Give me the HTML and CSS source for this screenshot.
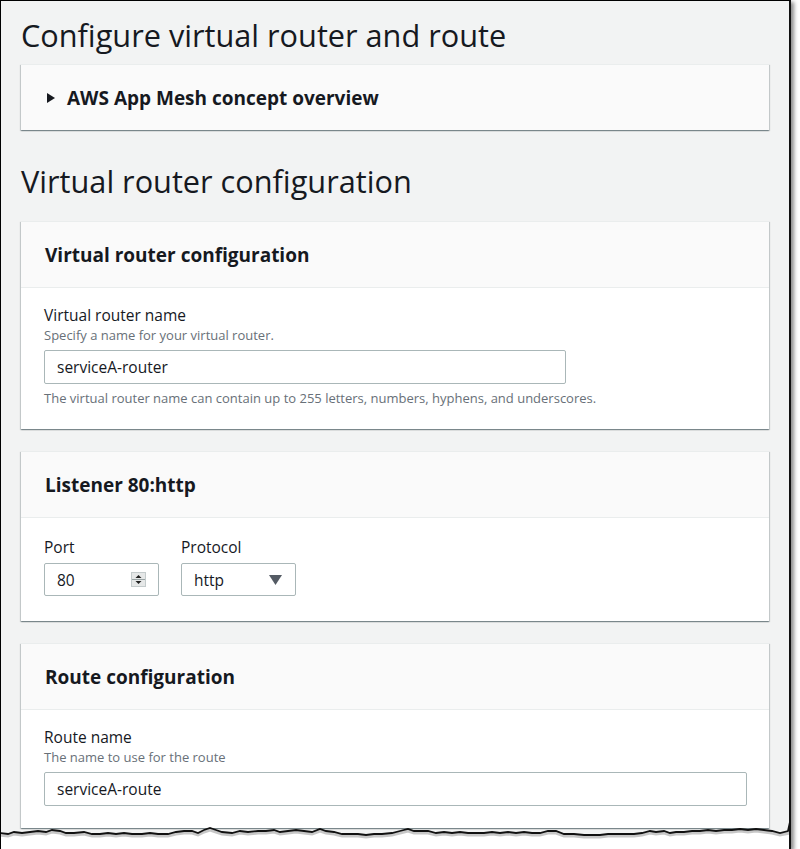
FILE: index.html
```html
<!DOCTYPE html>
<html lang="en">
<head>
<meta charset="utf-8">
<title>Configure virtual router and route</title>
<link rel="stylesheet" href="styles.css">
</head>
<body>
<div class="frame">
  <h1 class="page-title">Configure virtual router and route</h1>

  <div class="card expand">
    <div class="expand-head">
      <svg class="caret" width="8" height="10" viewBox="0 0 8 10"><polygon points="0,0 8,5 0,10" fill="#16191f"/></svg>
      <span>AWS App Mesh concept overview</span>
    </div>
  </div>

  <h2 class="section-title">Virtual router configuration</h2>

  <div class="card">
    <div class="card-head">Virtual router configuration</div>
    <div class="card-body">
      <div class="label">Virtual router name</div>
      <div class="desc">Specify a name for your virtual router.</div>
      <div class="input wide-a">serviceA-router</div>
      <div class="help">The virtual router name can contain up to 255 letters, numbers, hyphens, and underscores.</div>
    </div>
  </div>

  <div class="card">
    <div class="card-head">Listener 80:http</div>
    <div class="card-body body-listener">
      <div class="row">
        <div class="field">
          <div class="label lbl-tight">Port</div>
          <div class="input small">
            <span>80</span>
            <svg class="spinner" width="15" height="15" viewBox="0 0 15 15">
              <rect x="0.5" y="0.5" width="14" height="14" fill="#e6e8e8" stroke="#c4cbcc"/>
              <line x1="1" y1="7.5" x2="14" y2="7.5" stroke="#9aa4a5"/>
              <polygon points="4.5,6 7.5,3 10.5,6" fill="#222"/>
              <polygon points="4.5,9 7.5,12 10.5,9" fill="#222"/>
            </svg>
          </div>
        </div>
        <div class="field">
          <div class="label lbl-tight">Protocol</div>
          <div class="input small select">
            <span>http</span>
            <svg class="arrow" width="13" height="10" viewBox="0 0 13 10"><polygon points="0,0 13,0 6.5,10" fill="#545b64"/></svg>
          </div>
        </div>
      </div>
    </div>
  </div>

  <div class="card">
    <div class="card-head">Route configuration</div>
    <div class="card-body">
      <div class="label">Route name</div>
      <div class="desc">The name to use for the route</div>
      <div class="input wide-b">serviceA-route</div>
    </div>
  </div>

  <svg class="torn" width="800" height="30" viewBox="0 0 800 30" preserveAspectRatio="none">
    <path d="M0,11 L8,12 L14,10 L22,11 L30,10 L38,9 L46,10 L52,8 L60,9 L66,11 L74,11 L84,10 L92,12 L100,12 L108,11 L116,12 L124,11 L132,12 L142,12 L150,11 L158,12 L168,12 L176,10 L184,9 L192,9 L198,11 L204,8 L210,6 L216,8 L222,10 L232,11 L240,9 L248,10 L258,9 L266,9 L274,8 L280,10 L288,9 L296,8 L304,9 L312,10 L320,7 L326,9 L334,10 L342,12 L350,12 L358,12 L366,13 L374,12 L382,12 L392,11 L400,9 L408,7 L414,9 L420,9 L428,9 L436,11 L444,10 L452,11 L460,10 L468,11 L476,11 L484,11 L492,10 L500,11 L508,10 L516,11 L524,10 L532,11 L540,11 L548,9 L556,9 L564,12 L574,12 L584,13 L592,13 L600,13 L608,12 L616,12 L626,12 L634,12 L642,11 L650,9 L656,10 L664,9 L670,11 L676,10 L684,10 L692,9 L700,9 L708,8 L716,9 L724,8 L732,8 L740,7 L748,8 L756,7 L764,8 L772,9 L780,11 L788,9 L790,0 L800,0 L800,30 L0,30 Z" fill="#ffffff"/>
    <path d="M0,13 L8,14 L14,12 L22,13 L30,12 L38,11 L46,12 L52,10 L60,11 L66,13 L74,13 L84,12 L92,14 L100,14 L108,13 L116,14 L124,13 L132,14 L142,14 L150,13 L158,14 L168,14 L176,12 L184,11 L192,11 L198,13 L204,10 L210,8 L216,10 L222,12 L232,13 L240,11 L248,12 L258,11 L266,11 L274,10 L280,12 L288,11 L296,10 L304,11 L312,12 L320,9 L326,11 L334,12 L342,14 L350,14 L358,14 L366,15 L374,14 L382,14 L392,13 L400,11 L408,9 L414,11 L420,11 L428,11 L436,13 L444,12 L452,13 L460,12 L468,13 L476,13 L484,13 L492,12 L500,13 L508,12 L516,13 L524,12 L532,13 L540,13 L548,11 L556,11 L564,14 L574,14 L584,15 L592,15 L600,15 L608,14 L616,14 L626,14 L634,14 L642,13 L650,11 L656,12 L664,11 L670,13 L676,12 L684,12 L692,11 L700,11 L708,10 L716,11 L724,10 L732,10 L740,9 L748,10 L756,9 L764,10 L772,11 L780,13 L790,11" fill="none" stroke="rgba(0,0,0,0.22)" stroke-width="3"/>
    <path d="M0,11 L8,12 L14,10 L22,11 L30,10 L38,9 L46,10 L52,8 L60,9 L66,11 L74,11 L84,10 L92,12 L100,12 L108,11 L116,12 L124,11 L132,12 L142,12 L150,11 L158,12 L168,12 L176,10 L184,9 L192,9 L198,11 L204,8 L210,6 L216,8 L222,10 L232,11 L240,9 L248,10 L258,9 L266,9 L274,8 L280,10 L288,9 L296,8 L304,9 L312,10 L320,7 L326,9 L334,10 L342,12 L350,12 L358,12 L366,13 L374,12 L382,12 L392,11 L400,9 L408,7 L414,9 L420,9 L428,9 L436,11 L444,10 L452,11 L460,10 L468,11 L476,11 L484,11 L492,10 L500,11 L508,10 L516,11 L524,10 L532,11 L540,11 L548,9 L556,9 L564,12 L574,12 L584,13 L592,13 L600,13 L608,12 L616,12 L626,12 L634,12 L642,11 L650,9 L656,10 L664,9 L670,11 L676,10 L684,10 L692,9 L700,9 L708,8 L716,9 L724,8 L732,8 L740,7 L748,8 L756,7 L764,8 L772,9 L780,11 L788,9 L790,0" fill="none" stroke="#111" stroke-width="1.8"/>
  </svg>
</div>
</body>
</html>
```

FILE: styles.css
```css
html, body {
  margin: 0;
  padding: 0;
  background: #ffffff;
}

body {
  font-family: "Open Sans", "Liberation Sans", sans-serif;
  color: #16191f;
  width: 800px;
  height: 849px;
  overflow: hidden;
}

.frame {
  position: relative;
  box-sizing: border-box;
  width: 791px;
  height: 849px;
  background: #f2f3f3;
  border-left: 1px solid #000;
  border-top: 1px solid #000;
  border-right: 2px solid #111;
  box-shadow: 3px 2px 4px rgba(0, 0, 0, 0.45);
  padding: 0 19px 0 20px;
  overflow: hidden;
}

.page-title {
  margin: 0;
  padding-top: 14px;
  font-size: 30.7px;
  line-height: 40px;
  font-weight: 400;
  color: #16191f;
}

.section-title {
  margin: 29px 0 18px;
  font-size: 30.7px;
  line-height: 44px;
  font-weight: 400;
  color: #16191f;
}

.card {
  width: 748px;
  background: #ffffff;
  border-top: 1px solid #eaeded;
  box-shadow: 0 1px 1px 0 rgba(0, 28, 36, 0.3), 1px 1px 1px 0 rgba(0, 28, 36, 0.15), -1px 1px 1px 0 rgba(0, 28, 36, 0.15);
  margin-bottom: 22px;
}

.card.expand {
  margin-top: 9px;
  margin-bottom: 0;
  background: #fafafa;
}

.expand-head {
  height: 65px;
  display: flex;
  align-items: center;
  gap: 12px;
  padding-left: 26px;
  font-size: 19px;
  font-weight: 700;
}

.caret {
  display: block;
}

.card-head {
  box-sizing: border-box;
  height: 66px;
  background: #fafafa;
  border-bottom: 1px solid #eaeded;
  padding: 0 24px;
  display: flex;
  align-items: center;
  font-size: 19px;
  font-weight: 700;
}

.card-body {
  padding: 17px 23px 22px;
}

.body-listener {
  padding-top: 19px;
  padding-bottom: 25px;
}

.label {
  font-size: 15.5px;
  line-height: 20px;
}

.lbl-tight {
  margin-bottom: 6px;
}

.desc {
  font-size: 13px;
  line-height: 20px;
  color: #687078;
}

.help {
  margin-top: 5px;
  font-size: 13px;
  line-height: 18px;
  color: #687078;
}

.input {
  box-sizing: border-box;
  height: 34px;
  border: 1px solid #aab7b8;
  border-radius: 2px;
  padding: 0 12px;
  display: flex;
  align-items: center;
  font-size: 15.5px;
  color: #16191f;
  background: #fff;
  margin-top: 5px;
}

.wide-a {
  width: 522px;
}

.wide-b {
  width: 703px;
}

.row {
  display: flex;
  gap: 22px;
}

.input.small {
  margin-top: 0;
  height: 33px;
  width: 115px;
  justify-content: space-between;
  padding-right: 12px;
}

.input.select {
  padding-right: 13px;
}

.spinner, .arrow {
  display: block;
}

.torn {
  position: absolute;
  left: -1px;
  top: 821px;
}
```
